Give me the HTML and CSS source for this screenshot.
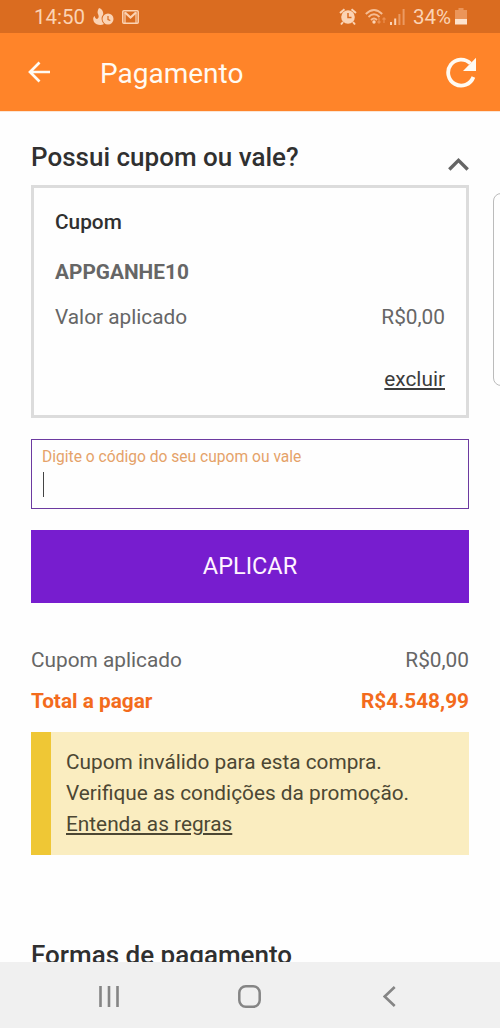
FILE: index.html
```html
<!DOCTYPE html>
<html lang="pt-BR">
<head>
<meta charset="utf-8">
<title>Pagamento</title>
<link rel="stylesheet" href="styles.css">
</head>
<body>
<div class="screen">
  <div class="status">
    <span class="clock">14:50</span>
    <svg class="s-flame" width="21" height="18" viewBox="0 0 21 18"><path fill="#fbd3b4" d="M6 0C9 1 11 4 10 7C8 9 8 13 11 16C8 18 3 17 1 14C-.5 11 .4 9 1.600 8C2 10 3 11 4 11C6 10 6 8 5 6C4 4 5 2 6 0Z"/><circle cx="15" cy="11" r="5.500" fill="#fbd3b4"/><path d="M15 8V11.500L17.300 12.500" fill="none" stroke="#da6c20" stroke-width="1.200"/></svg>
    <svg class="s-mail" width="17" height="14" viewBox="0 0 17 14"><rect x=".8" y=".8" width="15.400" height="12.400" rx="1" fill="none" stroke="#fbd3b4" stroke-width="1.500"/><path d="M3 2.500L8.500 7.500L14 2.500" fill="none" stroke="#fbd3b4" stroke-width="2.200"/><path d="M3 2V13M14 2V13" stroke="#fbd3b4" stroke-width="1.200"/></svg>
    <span class="grow"></span>
    <svg class="s-alarm" width="18" height="18" viewBox="0 0 18 18"><path d="M1 5L5.500 1.200M17 5L12.500 1.200M4 14L2 16.500M14 14L16 16.500" stroke="#fbd3b4" stroke-width="2" fill="none"/><circle cx="9" cy="9" r="6.800" fill="#fbd3b4"/><path d="M9 5V9.500H12.500" fill="none" stroke="#da6c20" stroke-width="1.500"/></svg>
    <svg class="s-wifi" width="22" height="18" viewBox="0 0 22 18"><g fill="none" stroke="#f6bd93" stroke-width="1.800"><path d="M.8 6Q9 -2 17.200 6"/><path d="M3.500 9Q9 3.500 14.500 9"/><path d="M6 12Q9 9 12 12"/></g><circle cx="9" cy="14" r="1.700" fill="#fbd3b4"/><path d="M14 10V15M12.500 13.500L14 15.200L15.500 13.500M19 15V10M17.500 11.500L19 9.800L20.500 11.500" fill="none" stroke="#eb8f50" stroke-width="1.200"/></svg>
    <svg class="s-signal" width="15" height="16" viewBox="0 0 15 16"><path fill="#fbd3b4" d="M0 13h2v3H0zM4.200 9.500h2V16h-2z"/><path fill="#ec9a62" d="M8.400 5h2v11h-2zM12.600 0h2v16h-2z"/></svg>
    <span class="percent">34%</span>
    <svg class="s-battery" width="12" height="17" viewBox="0 0 12 17"><path fill="#eb9559" d="M3.500 0h5v2H12v10H0V2h3.500z"/><path fill="#fde2cd" d="M0 11h12v5.500H0z"/></svg>
  </div>
  <header class="appbar">
    <svg class="back" width="23" height="22" viewBox="0 0 23 22"><path d="M22 11H2M11.500 1.500L2 11L11.500 20.500" fill="none" stroke="#fffaf2" stroke-width="2.700"/></svg>
    <h1 class="title">Pagamento</h1>
    <svg class="reload" width="31" height="31" viewBox="0 0 31 31"><path d="M27.400 20A13 13 0 1 1 24.500 6.500" fill="none" stroke="#fffaf2" stroke-width="3.800"/><path d="M30 .8V14H17Z" fill="#fffaf2"/></svg>
  </header>
  <main class="content">
    <div class="heading">
      <h2 class="section">Possui cupom ou vale?</h2>
      <svg class="chevron" width="22" height="15" viewBox="0 0 22 15"><path d="M2.300 12.500L11.500 3.300L20.700 12.500" fill="none" stroke="#656565" stroke-width="3.400"/></svg>
    </div>
    <section class="card">
      <div class="line name">Cupom</div>
      <div class="line code">APPGANHE10</div>
      <div class="line value"><span>Valor aplicado</span><span>R$0,00</span></div>
      <div class="line remove"><a class="link">excluir</a></div>
    </section>
    <div class="field"><label class="label">Digite o código do seu cupom ou vale</label><span class="caret"></span></div>
    <button class="apply">APLICAR</button>
    <div class="sum"><span>Cupom aplicado</span><span>R$0,00</span></div>
    <div class="sum total"><span>Total a pagar</span><span>R$4.548,99</span></div>
    <div class="notice">
      <div>Cupom inválido para esta compra.</div>
      <div>Verifique as condições da promoção.</div>
      <div><a class="link rules">Entenda as regras</a></div>
    </div>
    <h2 class="section next">Formas de pagamento</h2>
  </main>
  <nav class="nav">
    <svg width="20" height="21" viewBox="0 0 20 21"><path d="M1.500 0V21M10 0V21M18.500 0V21" stroke="#858585" stroke-width="2.600"/></svg>
    <svg width="23" height="23" viewBox="0 0 23 23"><rect x="1.300" y="1.300" width="20.400" height="20.400" rx="6.500" fill="none" stroke="#858585" stroke-width="2.500"/></svg>
    <svg width="13" height="21" viewBox="0 0 13 21"><path d="M11.700 1L1.700 10.500L11.700 20" fill="none" stroke="#858585" stroke-width="2.600"/></svg>
  </nav>
  <div class="edge"></div>
</div>
</body>
</html>
```
FILE: styles.css
```css
* { box-sizing: border-box; }
body { margin: 0; background: #fefefe; }
svg { display: block; flex: none; }
h1, h2 { margin: 0; font-weight: 400; }
.screen {
  position: relative;
  display: flex;
  flex-direction: column;
  width: 500px;
  height: 1028px;
  overflow: hidden;
  background: #fefefe;
  font-family: Roboto, "Liberation Sans", sans-serif;
  font-size: 20.8px;
  color: #666;
  white-space: nowrap;
}
.status {
  display: flex;
  align-items: center;
  height: 33px;
  flex: none;
  padding: 0 33px 0 34px;
  background: #da6c20;
  color: #fbd3b4;
  font-size: 20.5px;
  line-height: 33px;
}
.clock { width: 59px; padding-top: 1px; }
.s-mail { margin-left: 8px; }
.grow { flex: 1; }
.s-wifi { margin-left: 8px; }
.s-signal { margin-left: 3px; }
.percent { width: 42px; margin-left: 8px; padding-top: 1px; }
.appbar {
  display: flex;
  align-items: center;
  height: 78px;
  flex: none;
  padding: 0 23px 0 28px;
  background: #ff8429;
  color: #fffaf2;
}
.title { flex: 1; margin-left: 49px; font-size: 28px; line-height: 78px; padding-top: 3px; }
.content {
  flex: 1;
  min-height: 0;
  overflow: hidden;
  padding: 0 31px;
  border-top: 1px solid #fbe6d5;
}
.heading {
  display: flex;
  justify-content: space-between;
  height: 73px;
  padding-top: 29px;
}
.section { font-size: 26px; font-weight: 500; color: #303030; line-height: 32px; }
.chevron { margin-top: 16px; }
.card { height: 233px; border: 3px solid #dcdcdc; padding: 18px 21px 0; }
.line { display: flex; justify-content: space-between; height: 32px; line-height: 32px; }
.name { color: #303030; font-weight: 500; margin-bottom: 18px; }
.code { font-weight: 700; margin-bottom: 13px; }
.remove { justify-content: flex-end; margin-top: 30px; }
.link { color: #3c3c3c; text-decoration: underline; text-decoration-thickness: 2px; text-underline-offset: 2px; }
.field {
  height: 70px;
  margin-top: 21px;
  padding: 6px 9px 6px 10px;
  border: 1px solid #6c3aa0;
}
.label { display: block; color: #e5a269; font-size: 15.6px; line-height: 22px; }
.caret { display: block; width: 1px; height: 25px; margin: 4px 0 0 1px; background: #444; }
.apply {
  display: block;
  width: 100%;
  height: 73px;
  margin: 21px 0 40px;
  padding: 0;
  border: 0;
  background: #771dcf;
  color: #fff4ff;
  font: 23.5px/73px Roboto, "Liberation Sans", sans-serif;
}
.sum { display: flex; justify-content: space-between; height: 41px; line-height: 34px; }
.total { color: #f36b1c; font-weight: 700; height: 48px; }
.notice {
  height: 123px;
  padding: 15px 0 0 15px;
  border-left: 20px solid #efc735;
  background: #faedc0;
  color: #4c4733;
  line-height: 31px;
}
.rules { color: #4c4733; }
.next { margin-top: 84px; }
.nav {
  display: grid;
  grid-template-columns: repeat(3, 140px);
  justify-content: center;
  justify-items: center;
  align-items: center;
  height: 66px;
  flex: none;
  background: #f0f0f0;
  padding: 2px 2px 0 0;
}
.edge {
  position: absolute;
  left: 493px;
  top: 193px;
  width: 20px;
  height: 193px;
  border: 1px solid #bbb;
  border-radius: 8px;
}
```
